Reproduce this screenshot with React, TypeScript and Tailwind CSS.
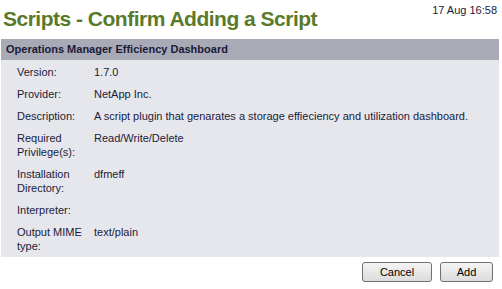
import React from "react";

const rows: [string, string][] = [
  ["Version:", "1.7.0"],
  ["Provider:", "NetApp Inc."],
  ["Description:", "A script plugin that genarates a storage effieciency and utilization dashboard."],
  ["Required Privilege(s):", "Read/Write/Delete"],
  ["Installation Directory:", "dfmeff"],
  ["Interpreter:", ""],
  ["Output MIME type:", "text/plain"],
];

export default function App() {
  return (
    <div className="w-[502px] h-[289px] bg-white overflow-hidden font-['Liberation_Sans',Arial,sans-serif] text-[#1b1b3a]">
      <div className="flex items-start justify-between pl-[3px] pr-[5px]">
        <h1 className="text-[21px] leading-[28px] font-bold tracking-[-0.5px] text-[#5a7a2b] pt-[5px]">
          Scripts - Confirm Adding a Script
        </h1>
        <div className="text-[11px] leading-[13px] pt-[4px]">17 Aug 16:58</div>
      </div>
      <div className="mt-[6px] ml-[1px] w-[498px]">
        <div className="bg-[#a8aab6] h-[21px] flex items-center pl-[5px] text-[11px] font-bold text-[#1a1a38]">
          Operations Manager Efficiency Dashboard
        </div>
        <div className="bg-[#e6e7ec] pt-[1px]">
          {rows.map(([k, v]) => (
            <div key={k} className="flex py-[4px] text-[11px] leading-[14px]">
              <div className="w-[93px] pl-[16px] pr-[6px] shrink-0">{k}</div>
              <div>{v}</div>
            </div>
          ))}
        </div>
      </div>
      <div className="flex justify-end gap-[8px] pr-[9px] mt-[5px]">
        <button className="w-[70px] h-[20px] border border-[#707070] rounded-[3px] bg-gradient-to-b from-[#f4f4f4] to-[#dcdcdc] text-[11px] text-black">
          Cancel
        </button>
        <button className="w-[53px] h-[20px] border border-[#707070] rounded-[3px] bg-gradient-to-b from-[#f4f4f4] to-[#dcdcdc] text-[11px] text-black">
          Add
        </button>
      </div>
    </div>
  );
}
